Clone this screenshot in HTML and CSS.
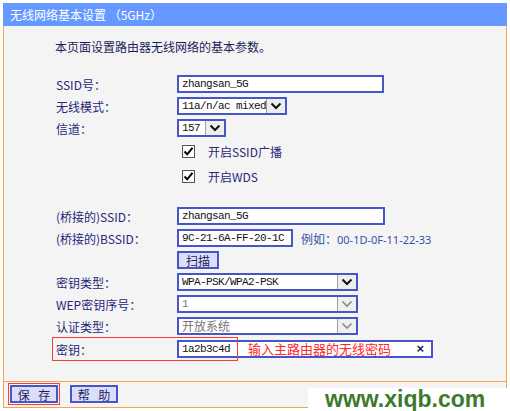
FILE: index.html
```html
<!DOCTYPE html>
<html>
<head>
<meta charset="utf-8">
<link rel="stylesheet" href="styles.css">
</head>
<body>
<div class="frame">
  <div class="hdr">无线网络基本设置 （5GHz）</div>
  <div class="panel">
    <p class="intro">本页面设置路由器无线网络的基本参数。</p>
    <div class="row"><span class="lbl">SSID号：</span><span class="inp w206">zhangsan_5G</span></div>
    <div class="row"><span class="lbl">无线模式：</span><span class="sel w109"><span class="val">11a/n/ac mixed</span><span class="arr"><svg width="12" height="8" viewBox="0 0 12 8"><path d="M1.5 1.5 L6 6 L10.5 1.5" fill="none" stroke="#111" stroke-width="2"/></svg></span></span></div>
    <div class="row"><span class="lbl">信道：</span><span class="sel w48"><span class="val">157</span><span class="arr"><svg width="12" height="8" viewBox="0 0 12 8"><path d="M1.5 1.5 L6 6 L10.5 1.5" fill="none" stroke="#111" stroke-width="2"/></svg></span></span></div>
    <div class="row chk"><span class="lbl"></span><span class="cb"><svg width="13" height="13" viewBox="0 0 13 13"><path d="M2.5 6.5 L5.2 9.3 L10.5 2.8" fill="none" stroke="#000" stroke-width="2"/></svg></span><span class="cbt">开启SSID广播</span></div>
    <div class="row chk"><span class="lbl"></span><span class="cb"><svg width="13" height="13" viewBox="0 0 13 13"><path d="M2.5 6.5 L5.2 9.3 L10.5 2.8" fill="none" stroke="#000" stroke-width="2"/></svg></span><span class="cbt">开启WDS</span></div>
    <div class="row gap"><span class="lbl">(桥接的)SSID：</span><span class="inp w207">zhangsan_5G</span></div>
    <div class="row"><span class="lbl">(桥接的)BSSID：</span><span class="inp w115">9C-21-6A-FF-20-1C</span><span class="eg">例如：<span class="mac">00-1D-0F-11-22-33</span></span></div>
    <div class="row"><span class="lbl"></span><span class="btn scan">扫描</span></div>
    <div class="row"><span class="lbl">密钥类型：</span><span class="sel w180"><span class="val">WPA-PSK/WPA2-PSK</span><span class="arr"><svg width="12" height="8" viewBox="0 0 12 8"><path d="M1.5 1.5 L6 6 L10.5 1.5" fill="none" stroke="#111" stroke-width="2"/></svg></span></span></div>
    <div class="row"><span class="lbl">WEP密钥序号：</span><span class="sel w180 dis"><span class="val">1</span><span class="arr"><svg width="12" height="8" viewBox="0 0 12 8"><path d="M1.5 1.5 L6 6 L10.5 1.5" fill="none" stroke="#8a8a8a" stroke-width="1.6"/></svg></span></span></div>
    <div class="row"><span class="lbl">认证类型：</span><span class="sel w180 dis"><span class="val cjk">开放系统</span><span class="arr"><svg width="12" height="8" viewBox="0 0 12 8"><path d="M1.5 1.5 L6 6 L10.5 1.5" fill="none" stroke="#8a8a8a" stroke-width="1.6"/></svg></span></span></div>
    <div class="row key"><span class="lbl">密钥：</span><span class="inp w255 keyinp"><span class="kv">1a2b3c4d</span><span class="note">输入主路由器的无线密码</span><span class="x">×</span></span><span class="redbox"></span></div>
  </div>
  <div class="foot">
    <span class="btn save">保 存</span>
    <span class="btn help">帮 助</span>
  </div>
</div>
<div class="wm">www.xiqb.com</div>
</body>
</html>
```
FILE: styles.css
```css
body {
  margin: 0;
  background: #fff;
  font-family: "Noto Sans CJK SC", sans-serif;
}
.frame {
  margin: 3px 0 0 3px;
  width: 504px;
}
.hdr {
  height: 23px;
  background: #6699ff;
  color: #fff;
  font-size: 12px;
  line-height: 23px;
  padding-left: 7px;
}
.panel {
  box-sizing: border-box;
  background: #f4f4f4;
  border: 1px solid #f9a447;
  border-top: none;
  padding: 10px 0 20px 0;
}
.intro {
  margin: 0 0 15px 51px;
  height: 22px;
  line-height: 22px;
  font-size: 12px;
  color: #1d1d5c;
}
.row {
  display: flex;
  align-items: center;
  height: 22px;
  margin-left: 52px;
  font-size: 12px;
  color: #27277a;
}
.row.chk { height: 25px; }
.row.gap { margin-top: 16px; }
.row.key { height: 24px; position: relative; }
.lbl {
  width: 121px;
  flex: none;
  white-space: nowrap;
}
.inp, .sel {
  box-sizing: border-box;
  height: 18px;
  border: 2px solid #4656c4;
  background: #fff;
  font-family: "Liberation Mono", monospace;
  font-size: 11px;
  letter-spacing: -0.6px;
  line-height: 14px;
  color: #111;
  padding-left: 3px;
  display: flex;
  align-items: center;
}
.w206 { width: 207px; }
.w207 { width: 208px; }
.w115 { width: 116px; }
.w109 { width: 110px; }
.w48 { width: 49px; }
.w180 { width: 181px; }
.w255 { width: 256px; }
.sel { padding-left: 0; }
.sel .val { flex: 1; padding-left: 3px; white-space: nowrap; }
.sel .arr {
  width: 18px;
  height: 14px;
  flex: none;
  background: #eeeeee;
  border-left: 1px solid #a0a0a0;
  display: flex;
  align-items: center;
  justify-content: center;
}
.sel.dis .val { color: #777; }
.sel.dis .arr { background: #f0f0f0; }
.cjk { font-family: "Noto Sans CJK SC", sans-serif; font-size: 12px; letter-spacing: 0; line-height: 14px; }
.cb {
  box-sizing: border-box;
  width: 13px;
  height: 13px;
  margin-left: 5px;
  border: 1px solid #555;
  background: #fff;
  display: flex;
}
.cb svg { margin: -1px; }
.cbt { margin-left: 13px; }
.eg {
  margin-left: 8px;
  color: #3450a8;
}
.mac {
  font-family: "Noto Sans", sans-serif;
  font-size: 11px;
}
.btn {
  box-sizing: border-box;
  display: flex;
  align-items: center;
  justify-content: center;
  height: 18px;
  border: 2px solid #4656c4;
  background: #dcdcfb;
  color: #1d1d5c;
  font-size: 12px;
}
.scan { width: 42px; }
.keyinp { padding-left: 3px; }
.kv { width: 66px; flex: none; }
.note {
  font-family: "Noto Sans CJK SC", sans-serif;
  font-size: 13px;
  letter-spacing: 0;
  color: #ff2626;
  flex: 1;
}
.x {
  font-family: "Liberation Sans", sans-serif;
  font-weight: bold;
  font-size: 13px;
  color: #1d1d5c;
  margin-right: 7px;
  letter-spacing: 0;
}
.redbox {
  position: absolute;
  left: -4px;
  top: 0;
  width: 186px;
  height: 24px;
  box-sizing: border-box;
  border: 1px solid #ff3a3a;
}
.foot {
  box-sizing: border-box;
  height: 26px;
  background: #f4f4f4;
  border: 1px solid #f9a447;
  border-top: none;
  display: flex;
  align-items: flex-start;
  padding: 3px 0 0 6px;
  gap: 12px;
}
.save, .help { width: 48px; height: 18px; letter-spacing: 3px; padding-left: 3px; }
.save { outline: 1px solid #ff3a3a; outline-offset: 1px; }
.wm {
  position: absolute;
  left: 308px;
  top: 388px;
  width: 202px;
  height: 23px;
  background: #fff;
  color: #3b7a2d;
  font-family: "Liberation Sans", sans-serif;
  font-weight: bold;
  font-size: 23px;
  line-height: 22px;
  padding-left: 17px;
  box-sizing: border-box;
  white-space: nowrap;
}
```
